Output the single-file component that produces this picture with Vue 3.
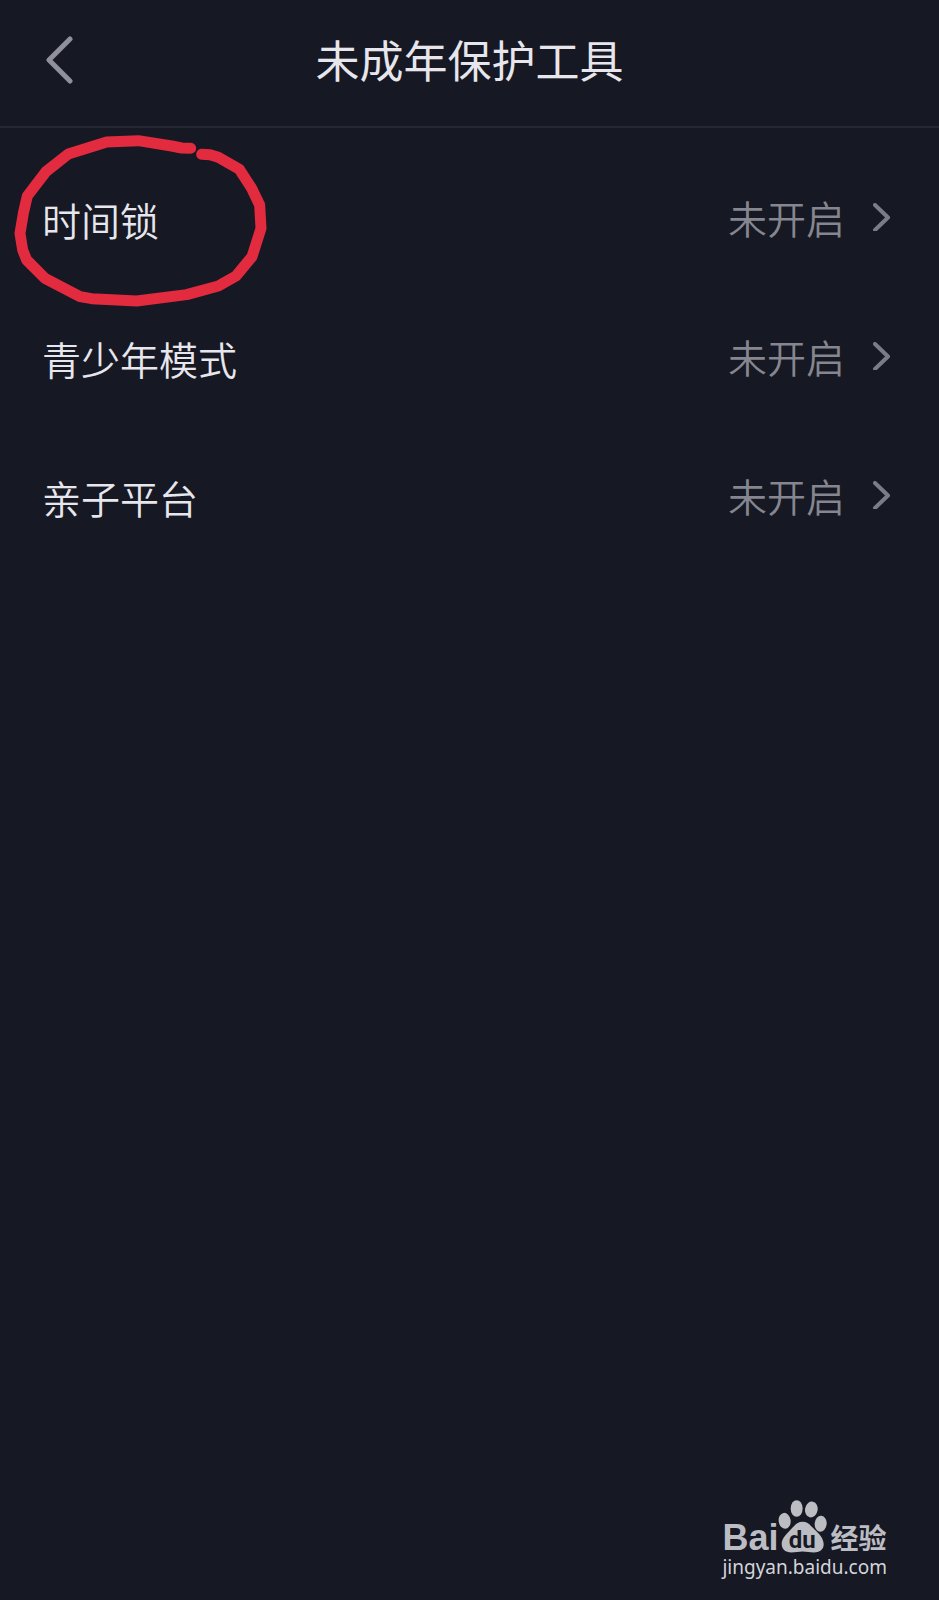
<script setup>
const items = [
  { id: 'time-lock', label: '时间锁', status: '未开启' },
  { id: 'teen-mode', label: '青少年模式', status: '未开启' },
  { id: 'family', label: '亲子平台', status: '未开启' },
]
</script>

<template>
  <div class="screen">
    <header class="bar">
      <button class="back" type="button" aria-label="返回">
        <svg viewBox="0 0 28 50" width="28" height="50" aria-hidden="true">
          <path d="M24 4 3 25 24 46" />
        </svg>
      </button>
      <h1 class="title">未成年保护工具</h1>
    </header>

    <main class="list">
      <button v-for="item in items" :key="item.id" class="row" type="button">
        <span class="label">{{ item.label }}</span>
        <span class="status">
          {{ item.status }}
          <svg class="chevron" viewBox="0 0 18 28" width="18" height="28" aria-hidden="true">
            <path d="M2 2 15 14.500 2 27" />
          </svg>
        </span>
      </button>

      <svg class="marker" viewBox="0 0 870 600" width="290" height="200" aria-hidden="true">
        <polyline
          points="572,85 545,84 515,78 415,62 320,66 205,102 138,155 82,228 70,280 60,340 68,390 80,420 135,475 240,530 275,536 410,543 560,524 655,498 708,468 756,410 783,325 779,255 755,205 718,148 655,112 630,104 605,103"
        />
      </svg>
    </main>

    <footer class="source">
      <div class="brand">
        <span class="bai">Bai</span>
        <svg class="paw" viewBox="0 0 150 158" width="50" height="53" aria-hidden="true">
          <ellipse cx="20" cy="62" rx="18" ry="24" transform="rotate(-8 20 62)" />
          <ellipse cx="56" cy="25" rx="18" ry="25" />
          <ellipse cx="100" cy="28" rx="19" ry="24" transform="rotate(12 100 28)" />
          <ellipse cx="128" cy="71" rx="18" ry="24" transform="rotate(5 128 71)" />
          <path d="M74 65C91 65 97 76 109 87C124 101 137 114 137 133C137 149 124 157 108 157C94 157 87 154 74 154C61 154 54 157 40 157C23 157 11 148 11 131C11 114 26 101 39 87C50 76 57 65 74 65Z" />
          <text x="73" y="145" text-anchor="middle">du</text>
        </svg>
        <span class="cn">经验</span>
      </div>
      <a class="link" href="#">jingyan.baidu.com</a>
    </footer>
  </div>
</template>

<style>
body {
  margin: 0;
  background: #161823;
}
</style>

<style scoped>
.screen {
  display: flex;
  flex-direction: column;
  box-sizing: border-box;
  min-height: 100vh;
  background: #161823;
  color: #e6e6ec;
  font-family: "Noto Sans CJK SC", sans-serif;
}

button {
  border: 0;
  background: none;
  font-family: inherit;
  color: inherit;
  cursor: pointer;
}

.bar {
  display: grid;
  grid-template-columns: 80px 1fr 80px;
  align-items: center;
  padding-bottom: 6px;
  height: 120px;
  border-bottom: 2px solid #252733;
}

.back {
  display: flex;
  padding: 0 0 0 46px;
}

.back path {
  fill: none;
  stroke: #8f909b;
  stroke-width: 5;
  stroke-linecap: round;
  stroke-linejoin: round;
}

.title {
  margin: 0;
  padding-bottom: 2px;
  text-align: center;
  font-size: 44px;
  line-height: 64px;
  font-weight: 400;
}

.list {
  position: relative;
  display: flex;
  flex-direction: column;
  padding-top: 21px;
}

.row {
  display: flex;
  justify-content: space-between;
  align-items: center;
  height: 139px;
  padding: 0 48px 0 42px;
  font-size: 39px;
  line-height: 56px;
  font-weight: 350;
}

.status {
  display: flex;
  align-items: center;
  gap: 28px;
  padding-bottom: 4px;
  color: #85868f;
}

.chevron path {
  fill: none;
  stroke: #7b7c87;
  stroke-width: 4;
  stroke-linecap: round;
  stroke-linejoin: round;
}

.marker {
  position: absolute;
  top: -8px;
  left: 0;
  pointer-events: none;
}

.marker polyline {
  fill: none;
  stroke: #e22b3e;
  stroke-width: 33;
  stroke-linecap: round;
  stroke-linejoin: round;
}

.source {
  align-self: flex-end;
  margin-top: auto;
  padding: 0 52px 19px 0;
  color: #bcbdc3;
}

.brand {
  display: flex;
  align-items: flex-end;
}

.bai {
  font-family: "Liberation Sans", sans-serif;
  font-size: 36px;
  line-height: 28px;
  padding-bottom: 1px;
  font-weight: 700;
}

.paw {
  fill: currentColor;
}

.paw text {
  fill: #161823;
  font-family: Roboto, sans-serif;
  font-size: 72px;
  font-weight: 700;
}

.cn {
  margin-left: 2px;
  font-size: 28px;
  line-height: 32px;
  font-weight: 700;
}

.link {
  display: block;
  color: #d4d5da;
  font-family: "Noto Sans", sans-serif;
  font-size: 19px;
  line-height: 28px;
  text-decoration: none;
}
</style>
